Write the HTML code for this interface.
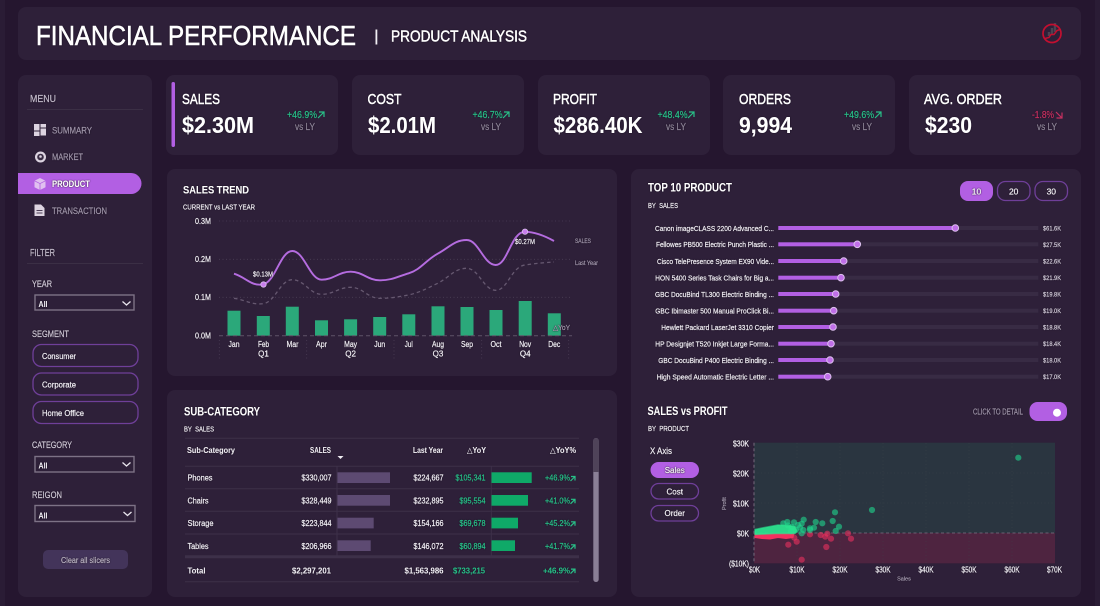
<!DOCTYPE html>
<html lang="en"><head><meta charset="utf-8"><title>Financial Performance</title>
<style>
html,body{margin:0;padding:0;background:#25162f;width:1100px;height:606px;overflow:hidden}
svg{display:block;position:absolute;left:0;top:0;color:#f1eef4;filter:blur(.3px)}
text{font-family:"Liberation Sans","DejaVu Sans",sans-serif;fill:currentColor;stroke:currentColor;stroke-width:.22px;filter:drop-shadow(0 0 .7px #140a1c)}
.b{font-weight:700;stroke-width:.05px}
.w{color:#fff}
.t{stroke-width:.6px}
.h{stroke-width:.5px}
.m{color:#a197ab}
.g{color:#28c088}
.r{color:#c5305f}
.d{color:#8f8698}
.f{color:#d0c9d6}
.p{fill:none;stroke:#6f3f99;stroke-width:1.3}
.sel{fill:none;stroke:#7d7286;stroke-width:1.4}
.chev{fill:none;stroke:#e8e4ec;stroke-width:1.3}
.ag{fill:none;stroke:#28c088;stroke-width:1.2}
.ar{fill:none;stroke:#c5305f;stroke-width:1.2}
.bar{fill:#2ba87a}
.sb{fill:#5d4a72}
.gb{fill:#0fa968}
.tl{stroke:#3d3049;stroke-width:1;fill:none}
.trk{fill:#382b44}
.fg{fill:#b25fe3}
.dot{fill:#c06fe8;stroke:#dcc0ee;stroke-width:1}
.gd{fill:#1fd08a;fill-opacity:.62}
.rd{fill:#f0305e;fill-opacity:.58}
</style></head><body>
<svg width="1100" height="606" viewBox="0 0 1100 606" xmlns="http://www.w3.org/2000/svg">
<rect x="-5" y="-5" width="1110" height="616" fill="#25162f"/>
<rect x="-5" y="-5" width="10" height="616" fill="#2a1c35"/>
<rect x="1095" y="-5" width="10" height="616" fill="#2a1c35"/>
<g fill="#2e2039">
<rect x="18" y="7" width="1063" height="53" rx="8"/>
<rect x="18" y="75" width="134" height="522" rx="8"/>
<rect x="166" y="75" width="172" height="80" rx="8"/>
<rect x="352" y="75" width="172" height="80" rx="8"/>
<rect x="538" y="75" width="172" height="80" rx="8"/>
<rect x="723" y="75" width="172" height="80" rx="8"/>
<rect x="909" y="75" width="172" height="80" rx="8"/>
<rect x="167" y="169" width="450" height="207" rx="8"/>
<rect x="167" y="390" width="450" height="207" rx="8"/>
<rect x="631" y="169" width="450" height="428" rx="8"/>
</g>

<!-- header -->
<text x="36" y="45" font-size="28" textLength="320" lengthAdjust="spacingAndGlyphs" class="w t">FINANCIAL PERFORMANCE</text>
<rect x="375.500" y="29.500" width="1.800" height="15" fill="#f1eef4"/>
<text x="391" y="41.700" font-size="16" textLength="136" lengthAdjust="spacingAndGlyphs" class="w h">PRODUCT ANALYSIS</text>
<path d="M1049 36v-4M1052 34v-6M1055 32v-9" stroke="#4a4452" stroke-width="2.400" fill="none"/>
<circle cx="1052" cy="33.500" r="9" fill="none" stroke="#c30f30" stroke-width="1.700"/>
<path d="M1045 38.500l4-1 2-3 3 0 3-4 3-1" fill="none" stroke="#c30f30" stroke-width="1.500"/>

<!-- menu -->
<text x="30" y="102" font-size="10.500" textLength="26" lengthAdjust="spacingAndGlyphs" style="color:#c4bccb">MENU</text>
<rect x="27" y="109" width="116" height="1" fill="#3b2f45"/>
<path fill="#dcd3e0" d="M34 124h5.500v6.500H34zM40.500 124H46v3.500h-5.500zM40.500 128.500H46v7h-5.500zM34 131.500h5.500v4.500H34z"/>
<text x="52" y="133.500" font-size="9" textLength="40" lengthAdjust="spacingAndGlyphs" class="m">SUMMARY</text>
<circle cx="40.500" cy="157" r="5.500" fill="#dcd3e0"/><circle cx="40.500" cy="157" r="3.300" fill="#3a2d45"/><circle cx="40.500" cy="156.500" r="1.300" fill="#dcd3e0"/>
<text x="52" y="160" font-size="9" textLength="31" lengthAdjust="spacingAndGlyphs" class="m">MARKET</text>
<path d="M18 173H131a10.500 10.500 0 0 1 0 21H18z" fill="#b25fe3"/>
<path fill="#e0bff0" d="M40 178l5.500 2.800v6.400L40 190l-5.500-2.800v-6.400z"/><path d="M34.500 180.800L40 183.600l5.500-2.800M40 183.600V190" fill="none" stroke="#b25fe3" stroke-width=".8"/>
<text x="52" y="187" font-size="9" textLength="38" lengthAdjust="spacingAndGlyphs" class="w b">PRODUCT</text>
<path fill="#dcd3e0" d="M34.500 204.500h6.500l3.500 3.500v8h-10z"/><rect x="36.500" y="210" width="6" height="1" fill="#4a3d55"/><rect x="36.500" y="212.500" width="6" height="1" fill="#4a3d55"/>
<text x="52" y="214" font-size="9" textLength="55" lengthAdjust="spacingAndGlyphs" class="m">TRANSACTION</text>

<!-- filter -->
<text x="30" y="256" font-size="10.500" textLength="25" lengthAdjust="spacingAndGlyphs" style="color:#c4bccb">FILTER</text>
<rect x="27" y="263" width="116" height="1" fill="#3b2f45"/>
<text x="32" y="287" font-size="9.500" textLength="20" lengthAdjust="spacingAndGlyphs" class="f">YEAR</text>
<rect x="35" y="295" width="99" height="15" class="sel"/>
<text x="38.500" y="307" font-size="8.500" textLength="9" lengthAdjust="spacingAndGlyphs" class="b">All</text>
<path class="chev" d="M122.500 301.500l4 3.500 4-3.500"/>
<text x="32" y="337" font-size="9.500" textLength="37" lengthAdjust="spacingAndGlyphs" class="f">SEGMENT</text>
<rect x="33" y="344.500" width="105" height="22" rx="8.500" class="p"/>
<text x="42" y="359" font-size="8" textLength="34" lengthAdjust="spacingAndGlyphs">Consumer</text>
<rect x="33" y="373" width="105" height="22" rx="8.500" class="p"/>
<text x="42" y="387.500" font-size="8" textLength="34" lengthAdjust="spacingAndGlyphs">Corporate</text>
<rect x="33" y="401.500" width="105" height="22" rx="8.500" class="p"/>
<text x="42" y="416" font-size="8" textLength="42" lengthAdjust="spacingAndGlyphs">Home Office</text>
<text x="32" y="448" font-size="9.500" textLength="40" lengthAdjust="spacingAndGlyphs" class="f">CATEGORY</text>
<rect x="35" y="456.500" width="99" height="15.500" class="sel"/>
<text x="38.500" y="468.500" font-size="8.500" textLength="9" lengthAdjust="spacingAndGlyphs" class="b">All</text>
<path class="chev" d="M122.500 462.500l4 3.500 4-3.500"/>
<text x="32" y="498" font-size="9.500" textLength="30" lengthAdjust="spacingAndGlyphs" class="f">REIGON</text>
<rect x="35" y="505.500" width="100" height="16" class="sel"/>
<text x="38.500" y="518.500" font-size="8.500" textLength="9" lengthAdjust="spacingAndGlyphs" class="b">All</text>
<path class="chev" d="M123.500 512l4 3.500 4-3.500"/>
<rect x="43" y="550" width="85" height="19" rx="5" fill="#43345a"/>
<text x="61" y="563" font-size="8" textLength="49" lengthAdjust="spacingAndGlyphs" style="color:#bab2c2">Clear all slicers</text>

<!-- KPI -->
<rect x="171.500" y="82" width="3.500" height="65" rx="1.700" fill="#b25fe3"/>
<text x="182" y="104" font-size="15" textLength="38" lengthAdjust="spacingAndGlyphs" class="w h">SALES</text>
<text x="182" y="133" font-size="23" textLength="72" lengthAdjust="spacingAndGlyphs" class="w b">$2.30M</text>
<text x="287" y="118" font-size="10" textLength="30" lengthAdjust="spacingAndGlyphs" class="g">+46.9%</text>
<path class="ag" d="M318 118l5.500-5.500M319 112h5v5"/>
<text x="295" y="130" font-size="10" textLength="20" lengthAdjust="spacingAndGlyphs" class="d">vs LY</text>

<text x="367.500" y="104" font-size="15" textLength="34" lengthAdjust="spacingAndGlyphs" class="w h">COST</text>
<text x="368" y="133" font-size="23" textLength="68" lengthAdjust="spacingAndGlyphs" class="w b">$2.01M</text>
<text x="472.500" y="118" font-size="10" textLength="30" lengthAdjust="spacingAndGlyphs" class="g">+46.7%</text>
<path class="ag" d="M503 118l5.500-5.500M504 112h5v5"/>
<text x="481" y="130" font-size="10" textLength="20" lengthAdjust="spacingAndGlyphs" class="d">vs LY</text>

<text x="553" y="104" font-size="15" textLength="44" lengthAdjust="spacingAndGlyphs" class="w h">PROFIT</text>
<text x="553.500" y="133" font-size="23" textLength="89" lengthAdjust="spacingAndGlyphs" class="w b">$286.40K</text>
<text x="657.500" y="118" font-size="10" textLength="30" lengthAdjust="spacingAndGlyphs" class="g">+48.4%</text>
<path class="ag" d="M688 118l5.500-5.500M689 112h5v5"/>
<text x="666" y="130" font-size="10" textLength="20" lengthAdjust="spacingAndGlyphs" class="d">vs LY</text>

<text x="739" y="104" font-size="15" textLength="52" lengthAdjust="spacingAndGlyphs" class="w h">ORDERS</text>
<text x="739" y="133" font-size="23" textLength="53" lengthAdjust="spacingAndGlyphs" class="w b">9,994</text>
<text x="844" y="118" font-size="10" textLength="30" lengthAdjust="spacingAndGlyphs" class="g">+49.6%</text>
<path class="ag" d="M875 118l5.500-5.500M876 112h5v5"/>
<text x="852" y="130" font-size="10" textLength="20" lengthAdjust="spacingAndGlyphs" class="d">vs LY</text>

<text x="924" y="104" font-size="15" textLength="78" lengthAdjust="spacingAndGlyphs" class="w h">AVG. ORDER</text>
<text x="925" y="133" font-size="23" textLength="47" lengthAdjust="spacingAndGlyphs" class="w b">$230</text>
<text x="1032" y="118" font-size="10" textLength="22" lengthAdjust="spacingAndGlyphs" class="r">-1.8%</text>
<path class="ar" d="M1056 112l5.500 5.500M1062 112.500v5.500h-5.500"/>
<text x="1037" y="130" font-size="10" textLength="20" lengthAdjust="spacingAndGlyphs" class="d">vs LY</text>

<!-- sales trend -->
<text x="183" y="193.500" font-size="11" textLength="66" lengthAdjust="spacingAndGlyphs" class="w b">SALES TREND</text>
<text x="183" y="209.500" font-size="7.500" textLength="72" lengthAdjust="spacingAndGlyphs">CURRENT vs LAST YEAR</text>
<g stroke="#4a3d55" stroke-width=".8" stroke-dasharray="1 2.500">
<path d="M219 221H572M219 259.300H572M219 297.300H572"/>
<path d="M219.300 340v20M306.700 340v20M394 340v20M481.700 340v20M568.700 340v20"/>
</g>
<g font-size="8">
<text x="195" y="224" textLength="16" lengthAdjust="spacingAndGlyphs">0.3M</text>
<text x="195" y="262" textLength="16" lengthAdjust="spacingAndGlyphs">0.2M</text>
<text x="195" y="300" textLength="16" lengthAdjust="spacingAndGlyphs">0.1M</text>
<text x="195" y="338.500" textLength="16" lengthAdjust="spacingAndGlyphs">0.0M</text>
</g>
<rect class="bar" x="227.500" y="310.700" width="13" height="25"/>
<rect class="bar" x="256.800" y="316" width="13" height="19.700"/>
<rect class="bar" x="285.800" y="306.700" width="13" height="29"/>
<rect class="bar" x="315" y="320.300" width="13" height="15.400"/>
<rect class="bar" x="344.100" y="319.300" width="13" height="16.400"/>
<rect class="bar" x="373.200" y="317" width="13" height="18.700"/>
<rect class="bar" x="402.300" y="314.300" width="13" height="21.400"/>
<rect class="bar" x="431.500" y="306.300" width="13" height="29.400"/>
<rect class="bar" x="460.500" y="307" width="13" height="28.700"/>
<rect class="bar" x="489.500" y="310" width="13" height="25.700"/>
<rect class="bar" x="518.700" y="301" width="13" height="34.700"/>
<rect class="bar" x="547.800" y="313.300" width="13" height="22.400"/>
<path d="M219 335.700H572" stroke="#5f5268" stroke-width="1" stroke-dasharray="4 3"/>
<path d="M234 298.300C246 300 251 305 263.300 303.700C275.300 302 280.300 279.700 292.300 279.700C304.300 279.700 309.700 294.300 321.700 294.300C333.700 294.300 338.700 287.300 350.700 287.300C362.700 287.300 367.700 298.300 379.700 298.300C391.700 298.300 396.700 297 408.700 295C420.700 292 425.700 289 437.700 283.300C449.700 277 454.700 268.300 466.700 268.300C478.700 268.300 483.700 290.300 495.700 290.300C507.700 290.300 511 267 525 265C535 263.500 545 262.500 554 262" fill="none" stroke="#665870" stroke-width="1.300" stroke-dasharray="3.500 3"/>
<path d="M234 273.700C246 277.300 251.300 286.700 263.300 284.300C275.300 281.900 280.300 251 292.300 251C304.300 251 309.700 279.700 321.700 279.700C333.700 279.700 338.700 271.700 350.700 271.700C362.700 271.700 367.700 280.300 379.700 280.300C391.700 280.300 396.700 276.900 408.700 273.300C420.700 269.700 425.700 260.300 437.700 253.700C449.700 247.100 454.700 240 466.700 240C478.700 240 483.700 265 495.700 265C507.700 265 511 232 525 231.700C535 232 545 236 554 241" fill="none" stroke="#b56ce0" stroke-width="1.900"/>
<circle cx="263.500" cy="284.500" r="2.700" fill="#c77dec" stroke="#dcc0ee" stroke-width=".8"/>
<circle cx="525" cy="231.700" r="2.700" fill="#c77dec" stroke="#dcc0ee" stroke-width=".8"/>
<text x="253" y="276.300" font-size="7" textLength="20" lengthAdjust="spacingAndGlyphs">$0.13M</text>
<text x="515" y="244" font-size="7" textLength="20" lengthAdjust="spacingAndGlyphs">$0.27M</text>
<text x="575" y="243" font-size="6.500" textLength="16" lengthAdjust="spacingAndGlyphs" class="m">SALES</text>
<text x="575" y="265" font-size="6.500" textLength="23" lengthAdjust="spacingAndGlyphs" class="m">Last Year</text>
<text x="553" y="330" font-size="7" textLength="17" lengthAdjust="spacingAndGlyphs" class="m">△YoY</text>
<g font-size="8" text-anchor="middle">
<text x="234" y="347" textLength="11" lengthAdjust="spacingAndGlyphs">Jan</text>
<text x="263.500" y="347" textLength="11" lengthAdjust="spacingAndGlyphs">Feb</text>
<text x="292.500" y="347" textLength="12" lengthAdjust="spacingAndGlyphs">Mar</text>
<text x="321.500" y="347" textLength="11" lengthAdjust="spacingAndGlyphs">Apr</text>
<text x="350.600" y="347" textLength="13" lengthAdjust="spacingAndGlyphs">May</text>
<text x="379.700" y="347" textLength="11" lengthAdjust="spacingAndGlyphs">Jun</text>
<text x="408.800" y="347" textLength="8" lengthAdjust="spacingAndGlyphs">Jul</text>
<text x="438" y="347" textLength="12" lengthAdjust="spacingAndGlyphs">Aug</text>
<text x="467" y="347" textLength="12" lengthAdjust="spacingAndGlyphs">Sep</text>
<text x="496" y="347" textLength="11" lengthAdjust="spacingAndGlyphs">Oct</text>
<text x="525.200" y="347" textLength="12" lengthAdjust="spacingAndGlyphs">Nov</text>
<text x="554.300" y="347" textLength="12" lengthAdjust="spacingAndGlyphs">Dec</text>
<text x="263.500" y="356.700">Q1</text>
<text x="350.600" y="356.700">Q2</text>
<text x="438" y="356.700">Q3</text>
<text x="525.200" y="356.700">Q4</text>
</g>

<!-- sub-category -->
<text x="184" y="415.300" font-size="11.500" textLength="76" lengthAdjust="spacingAndGlyphs" class="w b">SUB-CATEGORY</text>
<text x="184" y="431.700" font-size="7.500" textLength="30" lengthAdjust="spacingAndGlyphs">BY&#160;&#160;SALES</text>
<path class="tl" d="M185 438.300H579M185 466.300H579M185 488.700H579M185 511.300H579M185 534H579M185 581.700H579"/>
<path d="M185 556.700H579" stroke="#3d3049" stroke-width="3"/>
<path class="tl" d="M337 466V558M491.300 466V558"/>
<g font-size="8" class="b">
<text class="b" x="187" y="453" textLength="48" lengthAdjust="spacingAndGlyphs">Sub-Category</text>
<text class="b" x="331" y="453" text-anchor="end" textLength="21" lengthAdjust="spacingAndGlyphs">SALES</text>
<text class="b" x="443" y="453" text-anchor="end" textLength="30" lengthAdjust="spacingAndGlyphs">Last Year</text>
<text class="b" x="486" y="453" text-anchor="end" textLength="19" lengthAdjust="spacingAndGlyphs">△YoY</text>
<text class="b" x="576" y="453" text-anchor="end" textLength="26" lengthAdjust="spacingAndGlyphs">△YoY%</text>
</g>
<path d="M337.500 456h6l-3 3z" fill="#f1eef4"/>
<rect class="sb" x="337.500" y="472.300" width="52.500" height="10.700"/>
<rect class="sb" x="337.500" y="495" width="52.500" height="10.700"/>
<rect class="sb" x="337.500" y="517.700" width="36.200" height="10.700"/>
<rect class="sb" x="337.500" y="540.300" width="33.200" height="10.700"/>
<rect class="gb" x="491.500" y="472.300" width="40.200" height="10.700"/>
<rect class="gb" x="491.500" y="495" width="36.500" height="10.700"/>
<rect class="gb" x="491.500" y="517.700" width="26.500" height="10.700"/>
<rect class="gb" x="491.500" y="540.300" width="23.500" height="10.700"/>
<g font-size="8">
<text x="187.500" y="480.700" textLength="25" lengthAdjust="spacingAndGlyphs">Phones</text>
<text x="187.500" y="503.500" textLength="21" lengthAdjust="spacingAndGlyphs">Chairs</text>
<text x="187.500" y="526" textLength="26" lengthAdjust="spacingAndGlyphs">Storage</text>
<text x="187.500" y="549" textLength="21" lengthAdjust="spacingAndGlyphs">Tables</text>
<text x="331.500" y="480.700" text-anchor="end" textLength="30" lengthAdjust="spacingAndGlyphs">$330,007</text>
<text x="331.500" y="503.500" text-anchor="end" textLength="30" lengthAdjust="spacingAndGlyphs">$328,449</text>
<text x="331.500" y="526" text-anchor="end" textLength="30" lengthAdjust="spacingAndGlyphs">$223,844</text>
<text x="331.500" y="549" text-anchor="end" textLength="30" lengthAdjust="spacingAndGlyphs">$206,966</text>
<text x="443.500" y="480.700" text-anchor="end" textLength="30" lengthAdjust="spacingAndGlyphs">$224,667</text>
<text x="443.500" y="503.500" text-anchor="end" textLength="30" lengthAdjust="spacingAndGlyphs">$232,895</text>
<text x="443.500" y="526" text-anchor="end" textLength="30" lengthAdjust="spacingAndGlyphs">$154,166</text>
<text x="443.500" y="549" text-anchor="end" textLength="30" lengthAdjust="spacingAndGlyphs">$146,072</text>
<text x="485.500" y="480.700" text-anchor="end" textLength="30" lengthAdjust="spacingAndGlyphs" class="g">$105,341</text>
<text x="485.500" y="503.500" text-anchor="end" textLength="26" lengthAdjust="spacingAndGlyphs" class="g">$95,554</text>
<text x="485.500" y="526" text-anchor="end" textLength="26" lengthAdjust="spacingAndGlyphs" class="g">$69,678</text>
<text x="485.500" y="549" text-anchor="end" textLength="26" lengthAdjust="spacingAndGlyphs" class="g">$60,894</text>
<text x="545" y="480.700" textLength="25" lengthAdjust="spacingAndGlyphs" class="g">+46.9%</text>
<text x="545" y="503.500" textLength="25" lengthAdjust="spacingAndGlyphs" class="g">+41.0%</text>
<text x="545" y="526" textLength="25" lengthAdjust="spacingAndGlyphs" class="g">+45.2%</text>
<text x="545" y="549" textLength="25" lengthAdjust="spacingAndGlyphs" class="g">+41.7%</text>
</g>
<path class="ag" d="M570.500 481l4-4M571 476.500h4v4M570.500 503.800l4-4M571 499.300h4v4M570.500 526.300l4-4M571 521.800h4v4M570.500 549.300l4-4M571 544.800h4v4"/>
<g font-size="8">
<text class="b" x="187.500" y="573.300" textLength="18" lengthAdjust="spacingAndGlyphs">Total</text>
<text class="b" x="331" y="573.300" text-anchor="end" textLength="39" lengthAdjust="spacingAndGlyphs">$2,297,201</text>
<text class="b" x="443.500" y="573.300" text-anchor="end" textLength="39" lengthAdjust="spacingAndGlyphs">$1,563,986</text>
<text class="b g" x="485" y="573.300" text-anchor="end" textLength="32" lengthAdjust="spacingAndGlyphs">$733,215</text>
<text class="b g" x="543" y="573.300" textLength="27" lengthAdjust="spacingAndGlyphs">+46.9%</text>
</g>
<path class="ag" d="M570.500 573.600l4-4M571 569.100h4v4"/>
<rect x="593.300" y="438" width="5.400" height="144" rx="2.700" fill="#8a7f96"/>
<path d="M593.300 472V440.700a2.700 2.700 0 0 1 5.400 0V472z" fill="#4f4359"/>

<!-- top 10 -->
<text x="648" y="191.700" font-size="11.500" textLength="84" lengthAdjust="spacingAndGlyphs" class="w b">TOP 10 PRODUCT</text>
<text x="648" y="208" font-size="7.500" textLength="30" lengthAdjust="spacingAndGlyphs">BY&#160;&#160;SALES</text>
<rect x="960" y="181" width="33" height="20" rx="8" fill="#b25fe3"/>
<rect x="997.500" y="181.500" width="32.500" height="19" rx="8" class="p"/>
<rect x="1035" y="181.500" width="32.500" height="19" rx="8" class="p"/>
<g font-size="8.500" text-anchor="middle">
<text x="976.500" y="194.500">10</text><text x="1013.700" y="194.500">20</text><text x="1051.300" y="194.500">30</text>
</g>
<g>
<rect class="trk" x="778.300" y="226" width="260" height="4"/>
<rect class="trk" x="778.300" y="242.300" width="260" height="4"/>
<rect class="trk" x="778.300" y="259" width="260" height="4"/>
<rect class="trk" x="778.300" y="275.700" width="260" height="4"/>
<rect class="trk" x="778.300" y="292" width="260" height="4"/>
<rect class="trk" x="778.300" y="308.700" width="260" height="4"/>
<rect class="trk" x="778.300" y="325" width="260" height="4"/>
<rect class="trk" x="778.300" y="341.700" width="260" height="4"/>
<rect class="trk" x="778.300" y="358" width="260" height="4"/>
<rect class="trk" x="778.300" y="374.700" width="260" height="4"/>
<rect class="fg" x="778.300" y="226" width="177" height="4"/>
<rect class="fg" x="778.300" y="242.300" width="79" height="4"/>
<rect class="fg" x="778.300" y="259" width="65.400" height="4"/>
<rect class="fg" x="778.300" y="275.700" width="62.700" height="4"/>
<rect class="fg" x="778.300" y="292" width="57.400" height="4"/>
<rect class="fg" x="778.300" y="308.700" width="55.400" height="4"/>
<rect class="fg" x="778.300" y="325" width="54.700" height="4"/>
<rect class="fg" x="778.300" y="341.700" width="52.700" height="4"/>
<rect class="fg" x="778.300" y="358" width="51.700" height="4"/>
<rect class="fg" x="778.300" y="374.700" width="49.400" height="4"/>
<circle class="dot" cx="955.300" cy="228" r="3.300"/>
<circle class="dot" cx="857.300" cy="244.300" r="3.300"/>
<circle class="dot" cx="843.700" cy="261" r="3.300"/>
<circle class="dot" cx="841" cy="277.700" r="3.300"/>
<circle class="dot" cx="835.700" cy="294" r="3.300"/>
<circle class="dot" cx="833.700" cy="310.700" r="3.300"/>
<circle class="dot" cx="833" cy="327" r="3.300"/>
<circle class="dot" cx="831" cy="343.700" r="3.300"/>
<circle class="dot" cx="830" cy="360" r="3.300"/>
<circle class="dot" cx="827.700" cy="376.700" r="3.300"/>
</g>
<g font-size="7.500">
<text x="655" y="230.800" textLength="119" lengthAdjust="spacingAndGlyphs">Canon imageCLASS 2200 Advanced C...</text>
<text x="656" y="247.100" textLength="118" lengthAdjust="spacingAndGlyphs">Fellowes PB500 Electric Punch Plastic ...</text>
<text x="657" y="263.800" textLength="117" lengthAdjust="spacingAndGlyphs">Cisco TelePresence System EX90 Vide...</text>
<text x="655.300" y="280.500" textLength="118.700" lengthAdjust="spacingAndGlyphs">HON 5400 Series Task Chairs for Big a...</text>
<text x="655" y="296.800" textLength="119" lengthAdjust="spacingAndGlyphs">GBC DocuBind TL300 Electric Binding ...</text>
<text x="655.300" y="313.500" textLength="118.700" lengthAdjust="spacingAndGlyphs">GBC Ibimaster 500 Manual ProClick Bi...</text>
<text x="661.300" y="329.800" textLength="112.700" lengthAdjust="spacingAndGlyphs">Hewlett Packard LaserJet 3310 Copier</text>
<text x="655.300" y="346.500" textLength="118.700" lengthAdjust="spacingAndGlyphs">HP Designjet T520 Inkjet Large Forma...</text>
<text x="658.300" y="362.800" textLength="115.700" lengthAdjust="spacingAndGlyphs">GBC DocuBind P400 Electric Binding ...</text>
<text x="656.700" y="379.500" textLength="117.300" lengthAdjust="spacingAndGlyphs">High Speed Automatic Electric Letter ...</text>
</g>
<g font-size="6.500" style="color:#cfc8d6">
<text x="1043" y="230.500" textLength="18" lengthAdjust="spacingAndGlyphs">$61.6K</text>
<text x="1043" y="246.800" textLength="18" lengthAdjust="spacingAndGlyphs">$27.5K</text>
<text x="1043" y="263.500" textLength="18" lengthAdjust="spacingAndGlyphs">$22.6K</text>
<text x="1043" y="280.200" textLength="18" lengthAdjust="spacingAndGlyphs">$21.9K</text>
<text x="1043" y="296.500" textLength="18" lengthAdjust="spacingAndGlyphs">$19.8K</text>
<text x="1043" y="313.200" textLength="18" lengthAdjust="spacingAndGlyphs">$19.0K</text>
<text x="1043" y="329.500" textLength="18" lengthAdjust="spacingAndGlyphs">$18.8K</text>
<text x="1043" y="346.200" textLength="18" lengthAdjust="spacingAndGlyphs">$18.4K</text>
<text x="1043" y="362.500" textLength="18" lengthAdjust="spacingAndGlyphs">$18.0K</text>
<text x="1043" y="379.200" textLength="18" lengthAdjust="spacingAndGlyphs">$17.0K</text>
</g>

<!-- sales vs profit -->
<text x="647.500" y="415" font-size="11.500" textLength="80" lengthAdjust="spacingAndGlyphs" class="w b">SALES vs PROFIT</text>
<text x="648" y="431" font-size="7.500" textLength="41" lengthAdjust="spacingAndGlyphs">BY&#160;&#160;PRODUCT</text>
<text x="973" y="414.700" font-size="8" textLength="50" lengthAdjust="spacingAndGlyphs" class="m">CLICK TO DETAIL</text>
<rect x="1029.500" y="402" width="37.500" height="19" rx="8" fill="#b25fe3"/>
<circle cx="1057" cy="412.700" r="4" fill="#fff"/>
<text x="650" y="454" font-size="9" textLength="22" lengthAdjust="spacingAndGlyphs">X Axis</text>
<rect x="650.500" y="462" width="48.500" height="16" rx="8" fill="#b25fe3"/>
<rect x="651" y="483.500" width="47.500" height="15.500" rx="7.700" class="p"/>
<rect x="651" y="505.500" width="47.500" height="15.500" rx="7.700" class="p"/>
<g font-size="8" text-anchor="middle">
<text x="674.700" y="473">Sales</text><text x="674.700" y="494.500">Cost</text><text x="674.700" y="516">Order</text>
</g>
<rect x="754" y="442.700" width="301" height="90.300" fill="#2a3540"/>
<rect x="754" y="533" width="301" height="30.300" fill="#4e2440"/>
<path d="M797 443V563M840 443V563M883 443V563M926 443V563M969 443V563M1012 443V563M754 473H1055M754 503H1055" stroke="#3f4a50" stroke-width=".6" stroke-dasharray="1 2.500" opacity=".6"/>
<path d="M754 442.700V563.300" stroke="#6a5f72" stroke-width="1.200" stroke-dasharray="3 2.500"/>
<path d="M754 533H1055" stroke="#6a5f72" stroke-width="1" stroke-dasharray="3 2.500"/>
<g font-size="8" text-anchor="end">
<text x="749" y="446.500" textLength="16" lengthAdjust="spacingAndGlyphs">$30K</text>
<text x="749" y="476.500" textLength="16" lengthAdjust="spacingAndGlyphs">$20K</text>
<text x="749" y="506.500" textLength="16" lengthAdjust="spacingAndGlyphs">$10K</text>
<text x="749" y="536.500" textLength="12" lengthAdjust="spacingAndGlyphs">$0K</text>
<text x="749" y="566.500" textLength="20" lengthAdjust="spacingAndGlyphs">($10K)</text>
</g>
<g font-size="8" text-anchor="middle">
<text x="754.500" y="572.300" textLength="11" lengthAdjust="spacingAndGlyphs">$0K</text><text x="797" y="572.300" textLength="15" lengthAdjust="spacingAndGlyphs">$10K</text><text x="840" y="572.300" textLength="15" lengthAdjust="spacingAndGlyphs">$20K</text><text x="883" y="572.300" textLength="15" lengthAdjust="spacingAndGlyphs">$30K</text><text x="926" y="572.300" textLength="15" lengthAdjust="spacingAndGlyphs">$40K</text><text x="969" y="572.300" textLength="15" lengthAdjust="spacingAndGlyphs">$50K</text><text x="1012" y="572.300" textLength="15" lengthAdjust="spacingAndGlyphs">$60K</text><text x="1054.500" y="572.300" textLength="15" lengthAdjust="spacingAndGlyphs">$70K</text>
</g>
<text x="904" y="580.500" font-size="5.500" text-anchor="middle" class="m">Sales</text>
<text transform="translate(726 510) rotate(-90)" font-size="5.500" class="m">Profit</text>
<!-- red points -->
<g class="rd">
<circle cx="788.300" cy="544.700" r="3.100"/><circle cx="801.700" cy="559.700" r="3.100"/><circle cx="826.300" cy="547" r="3.100"/><circle cx="851" cy="538.700" r="3.100"/><circle cx="848" cy="533.300" r="3.100"/><circle cx="831" cy="538.700" r="3.100"/><circle cx="825.300" cy="536.700" r="3.100"/><circle cx="820.700" cy="535" r="3.100"/><circle cx="827.300" cy="533.700" r="3.100"/><circle cx="810" cy="534.300" r="3.100"/><circle cx="796.700" cy="541.700" r="3.100"/><circle cx="794.300" cy="537.700" r="3.100"/>
</g>
<path d="M755 534L794 533L793 537.500L786 538.500L778 537.500L770 539L762 538.500L755 537.500Z" fill="#f4305f" stroke="#f4305f" stroke-width="1" stroke-linejoin="round"/>
<!-- green points -->
<g class="gd">
<circle cx="1018.300" cy="457.700" r="3.100"/><circle cx="872" cy="510" r="3.100"/><circle cx="835" cy="512.300" r="3.100"/><circle cx="832.700" cy="521" r="3.100"/><circle cx="839" cy="526.700" r="3.100"/><circle cx="835.700" cy="531" r="3.100"/><circle cx="822.300" cy="523.300" r="3.100"/><circle cx="815.700" cy="522" r="3.100"/><circle cx="814" cy="527.700" r="3.100"/><circle cx="810" cy="528.300" r="3.100"/><circle cx="803.700" cy="519.700" r="3.100"/><circle cx="801.700" cy="523.700" r="3.100"/><circle cx="794" cy="522.300" r="3.100"/><circle cx="787.300" cy="522" r="3.100"/><circle cx="783.300" cy="523.300" r="3.100"/><circle cx="803.300" cy="530" r="3.100"/><circle cx="800" cy="527.700" r="3.100"/><circle cx="810" cy="530" r="3.100"/><circle cx="801.700" cy="533.300" r="3.100"/><circle cx="792" cy="527" r="3.100"/><circle cx="796" cy="530" r="3.100"/><circle cx="788" cy="525.500" r="3.100"/><circle cx="798" cy="525" r="3.100"/><circle cx="791" cy="531" r="3.100"/>
</g>
<path d="M755 529.500L762 528L770 526.500L778 525L788 525.500L795 526.500L797 531L795 533.500L775 533.500L755 534.500Z" fill="#2be58f" fill-opacity=".92" stroke="#2be58f" stroke-opacity=".6" stroke-width="1.500" stroke-linejoin="round"/>
</svg>
</body></html>
